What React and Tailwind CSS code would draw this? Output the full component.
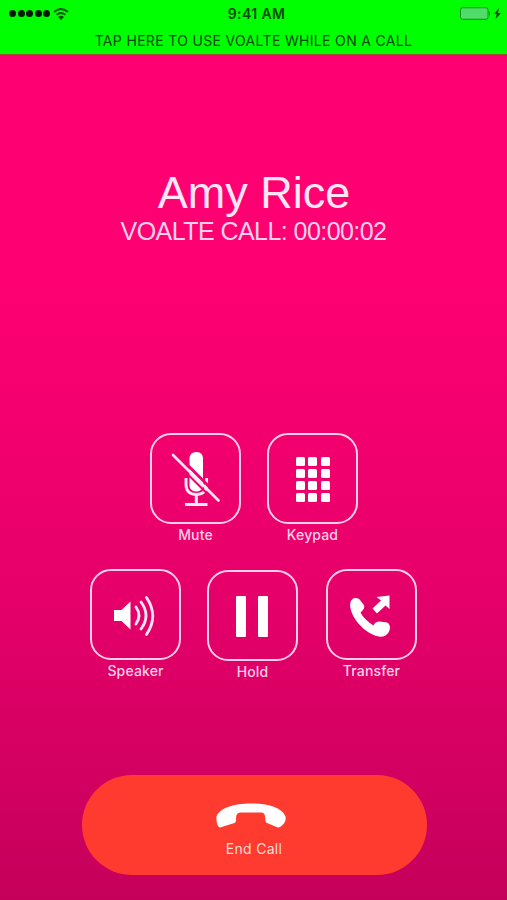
import React from 'react';

const MuteIcon = () => (
    <svg className="shrink-0 w-[91px] h-[91px]" viewBox="0 0 91 91" fill="none">
        <rect x="39.500" y="19" width="13.500" height="39.500" rx="6" fill="#fff" />
        <path d="M36 45v6.500c0 7 4.500 10 10.300 10S56.600 58.500 56.600 51.500v-6.500" stroke="#ffe6f4" strokeWidth="2.900" />
        <path d="M46.300 61v10M35 71.500h22.500" stroke="#ffeef8" strokeWidth="3" />
        <path d="M26 20.500l46 46" stroke="#f0006d" strokeWidth="2.800" />
        <path d="M22 25.500l45 45" stroke="#f0006d" strokeWidth="2" />
        <path d="M23 22l45.500 45.500" stroke="#ffe6f5" strokeWidth="2.600" strokeLinecap="round" />
    </svg>
);

const KeypadIcon = () => (
    <div className="grid grid-cols-3 gap-x-[3.500px] gap-y-[3px] pt-[2px]">
        {Array.from({ length: 12 }).map((_, i) => (
            <span key={i} className="w-[9px] h-[9px] rounded-[1.500px] bg-white" />
        ))}
    </div>
);

const SpeakerIcon = () => (
    <svg className="shrink-0 w-[91px] h-[91px]" viewBox="0 0 91 91" fill="none">
        <path d="M24 41h7.500l9-8.500v28l-9-8.500H24z" fill="#fff" />
        <g stroke="#ffe6f4" strokeWidth="2.800" strokeLinecap="round">
            <path d="M46 38q6 8.500 0 17" />
            <path d="M51 33q10 13.500 0 27" />
            <path d="M56.500 28.500q12.500 18.500 0 37" />
        </g>
    </svg>
);

const HoldIcon = () => (
    <div className="flex gap-[12px] pr-[2px] pt-px">
        <span className="w-[10px] h-[41px] rounded-[1px] bg-white" />
        <span className="w-[10px] h-[41px] rounded-[1px] bg-white" />
    </div>
);

const TransferIcon = () => (
    <svg className="shrink-0 w-[91px] h-[91px]" viewBox="0 0 91 91" fill="#fff">
        <path d="M26 30.500C28.500 28.300 32 28.800 34 31L37.500 35.500C39.200 38 38 40.500 34.500 43.500C37 48.500 42 53 47.500 56.500C48.500 54 50.500 52.500 53.500 52.500L60 53.300C64.500 54.500 65 59.500 62.500 63.500C60 67.500 55.500 68.500 50.500 67C38 63 26.500 50.500 24.300 38.500C23.800 35 24.300 32.500 26 30.500Z" />
        <path d="M63.500 26.500v13.500l-4-3.500-8.500 8-4.500-5 8.500-8-4.500-3.500z" />
    </svg>
);

const CallButton = ({ label, children }) => (
    <button className="flex flex-col items-center w-[91px]">
        <span className="flex items-center justify-center w-[91px] h-[91px] border-[2px] border-[#ffd0ea] rounded-[21px]">
            {children}
        </span>
        <span className="mt-px text-[14px] font-medium leading-5 tracking-[0.15px] text-[#ffd0e8]">{label}</span>
    </button>
);

const StatusBar = () => (
    <header className="h-[55px] bg-[#00ff00] text-[#064806] border-b border-[#a05030]">
        <div className="grid grid-cols-3 items-center h-[27px] pl-[9px] pr-[6px]">
            <div className="flex items-center gap-[1.500px]">
                {[0, 1, 2, 3, 4].map((dot) => (
                    <span key={dot} className="w-[7px] h-[7px] rounded-full bg-[#001b00]" />
                ))}
                <svg className="w-4 h-3 ml-[1px]" viewBox="0 0 16 12" fill="none" stroke="#005500" strokeWidth="1.900">
                    <path d="M1 4Q8-2 15 4M3.500 6.800Q8 3 12.500 6.800" />
                    <path d="M5 9Q8 6.500 11 9L8 12z" fill="#005500" stroke="none" />
                </svg>
            </div>
            <div className="pl-[3px] text-center text-[14px] font-semibold leading-5 tracking-[0.4px] whitespace-nowrap">9:41 AM</div>
            <div className="flex justify-end items-center">
                <svg className="w-[42px] h-[13px]" viewBox="0 0 42 13">
                    <rect x="1.500" y=".75" width="27.500" height="11.500" rx="2" fill="#50dc68" stroke="#168b18" />
                    <path d="M30 4q2 2.500 0 5z" fill="#0a6c0a" />
                    <path d="M40 1L35 7h2.700l-1.200 5L42 6h-3z" fill="#003c00" />
                </svg>
            </div>
        </div>
        <p className="text-center text-[14px] leading-[28px] tracking-[0.33px] whitespace-nowrap">
            TAP HERE TO USE VOALTE WHILE ON A CALL
        </p>
    </header>
);

const App = () => {
    return (
        <div className="flex flex-col w-[507px] h-[900px] overflow-hidden font-['Inter',sans-serif] bg-[linear-gradient(to_bottom,#ff0073_0%,#ff0073_30%,#e6006a_66%,#c5005b_100%)]">
            <StatusBar />

            <div className="h-[378px] pt-[113px] text-center font-['Liberation_Sans',sans-serif] whitespace-nowrap">
                <h1 className="pl-px text-[45px] leading-[50px] text-[#ffe6f5]">Amy Rice</h1>
                <p className="-mt-px text-[25px] leading-7 tracking-[-0.550px] text-[#ffd2ea]">VOALTE CALL: 00:00:02</p>
            </div>

            <div className="flex gap-[26px] h-[136px] pl-[150px]">
                <CallButton label="Mute"><MuteIcon /></CallButton>
                <CallButton label="Keypad"><KeypadIcon /></CallButton>
            </div>
            <div className="flex gap-[27px] h-[206px] pl-[90px]">
                <CallButton label="Speaker"><SpeakerIcon /></CallButton>
                <div className="pt-px -ml-px">
                    <CallButton label="Hold"><HoldIcon /></CallButton>
                </div>
                <div className="pl-px">
                    <CallButton label="Transfer"><TransferIcon /></CallButton>
                </div>
            </div>

            <button className="flex flex-col items-center w-[345px] h-[100px] ml-[81.500px] pt-[28px] rounded-full bg-[#ff3b30]">
                <svg className="w-[70px] h-[25px] ml-[-6px]" viewBox="0 0 70 25" fill="#fff">
                    <path d="M4 24.500C1.500 24.500 0 18 .5 13.500C4 4.500 18 .5 35 .5S66 4.500 69.500 13.500C70.500 18 68 21.500 64 24C63 24.700 61.500 24.500 60.500 24L51 20C48.500 19 50 14.500 48.500 11.500Q47.500 9.500 45.500 9.500H24Q21.500 9.500 20.500 12C19.500 15 21 19 18.500 20Z" />
                </svg>
                <span className="mt-[11px] text-[14px] leading-5 tracking-[0.3px] text-[#ffdad5]">End Call</span>
            </button>
        </div>
    );
};

export default App;
